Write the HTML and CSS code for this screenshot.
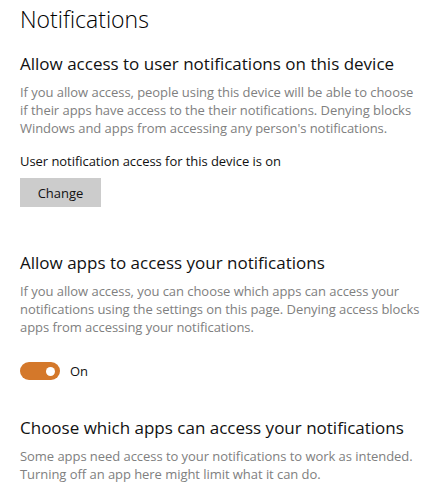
FILE: index.html
```html
<!DOCTYPE html>
<html lang="en">
<head>
<meta charset="utf-8">
<title>Notifications</title>
<link rel="stylesheet" href="styles.css">
</head>
<body>
<main class="page">
  <h1 class="title">Notifications</h1>

  <section class="group group-first">
    <h2 class="heading">Allow access to user notifications on this device</h2>
    <p class="desc">If you allow access, people using this device will be able to choose if their apps have access to the their notifications. Denying blocks Windows and apps from accessing any person's notifications.</p>
    <p class="status">User notification access for this device is on</p>
    <button class="btn" type="button">Change</button>
  </section>

  <section class="group group-second">
    <h2 class="heading">Allow apps to access your notifications</h2>
    <p class="desc">If you allow access, you can choose which apps can access your notifications using the settings on this page. Denying access blocks apps from accessing your notifications.</p>
    <div class="toggle-row">
      <span class="toggle"><span class="knob"></span></span>
      <span class="toggle-label">On</span>
    </div>
  </section>

  <section class="group group-third">
    <h2 class="heading">Choose which apps can access your notifications</h2>
    <p class="desc">Some apps need access to your notifications to work as intended. Turning off an app here might limit what it can do.</p>
  </section>
</main>
</body>
</html>
```

FILE: styles.css
```css
html, body {
  margin: 0;
  padding: 0;
  background: #ffffff;
}

body {
  font-family: "Open Sans", "Noto Sans", "Liberation Sans", sans-serif;
  color: #000000;
}

.page {
  padding: 1px 17px 0 20px;
  display: flex;
  flex-direction: column;
}

.title {
  margin: 0;
  font-size: 23px;
  font-weight: 300;
  line-height: 36px;
  letter-spacing: 0;
}

.group {
  display: flex;
  flex-direction: column;
  align-items: flex-start;
}

.group-first {
  margin-top: 14px;
}

.group-second {
  margin-top: 43px;
}

.group-third {
  margin-top: 35px;
}

.heading {
  margin: 0;
  font-size: 17px;
  font-weight: 400;
  line-height: 26px;
  letter-spacing: 0;
  color: #111111;
}

.desc {
  margin: 6px 0 0;
  font-size: 13px;
  line-height: 18px;
  color: #808080;
  letter-spacing: -0.05px;
}

.status {
  margin: 15px 0 0;
  font-size: 13px;
  line-height: 18px;
  color: #111111;
  letter-spacing: -0.05px;
}

.btn {
  margin-top: 8px;
  width: 81px;
  height: 29px;
  border: none;
  background: #cccccc;
  font-family: inherit;
  font-size: 13px;
  color: #111111;
  padding: 0;
}

.toggle-row {
  margin-top: 26px;
  display: flex;
  align-items: center;
  gap: 10px;
}

.toggle {
  width: 40px;
  height: 18px;
  border-radius: 9px;
  background: #d4782a;
  display: flex;
  align-items: center;
  justify-content: flex-end;
  padding-right: 5px;
  box-sizing: border-box;
}

.knob {
  width: 9px;
  height: 9px;
  border-radius: 50%;
  background: #ffffff;
}

.toggle-label {
  font-size: 13px;
  color: #111111;
}
```
